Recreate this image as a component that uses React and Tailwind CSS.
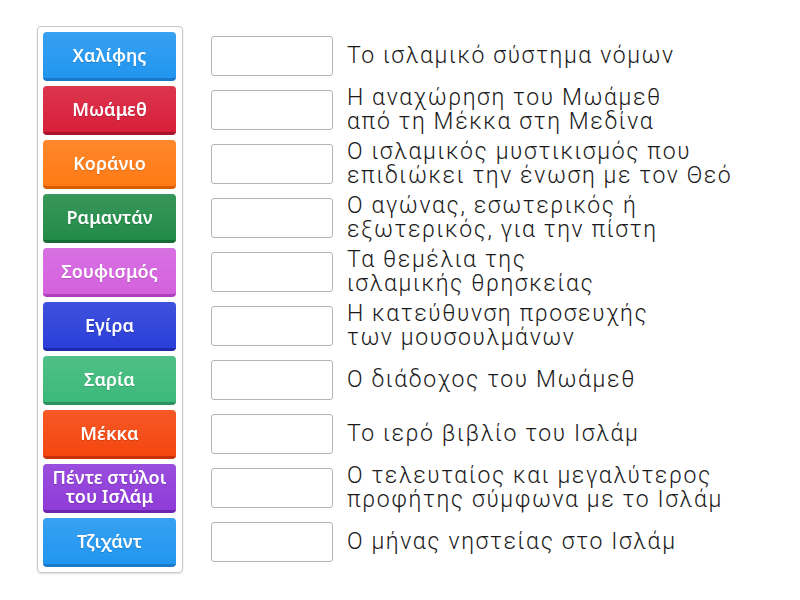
const tiles = [
  { label: 'Χαλίφης', cls: 'bg-[#2196f0] border-[#1a78c8]' },
  { label: 'Μωάμεθ', cls: 'bg-[#d81f3a] border-[#a8142a]' },
  { label: 'Κοράνιο', cls: 'bg-[#ff7a14] border-[#d95e00]' },
  { label: 'Ραμαντάν', cls: 'bg-[#228b48] border-[#176a34]' },
  { label: 'Σουφισμός', cls: 'bg-[#d461de] border-[#b03fbb]' },
  { label: 'Εγίρα', cls: 'bg-[#2a3ed9] border-[#1c2aa8]' },
  { label: 'Σαρία', cls: 'bg-[#3cb97a] border-[#2a935d]' },
  { label: 'Μέκκα', cls: 'bg-[#f5460f] border-[#c83305]' },
  { label: 'Πέντε στύλοι του Ισλάμ', cls: 'bg-[#8f3bd9] border-[#6d25b0]' },
  { label: 'Τζιχάντ', cls: 'bg-[#2196f0] border-[#1a78c8]' },
];

const prompts = [
  'Το ισλαμικό σύστημα νόμων',
  'Η αναχώρηση του Μωάμεθ\nαπό τη Μέκκα στη Μεδίνα',
  'Ο ισλαμικός μυστικισμός που\nεπιδιώκει την ένωση με τον Θεό',
  'Ο αγώνας, εσωτερικός ή\nεξωτερικός, για την πίστη',
  'Τα θεμέλια της\nισλαμικής θρησκείας',
  'Η κατεύθυνση προσευχής\nτων μουσουλμάνων',
  'Ο διάδοχος του Μωάμεθ',
  'Το ιερό βιβλίο του Ισλάμ',
  'Ο τελευταίος και μεγαλύτερος\nπροφήτης σύμφωνα με το Ισλάμ',
  'Ο μήνας νηστείας στο Ισλάμ',
];

export default function App() {
  return (
    <div className="w-[800px] h-[600px] bg-white flex items-start pt-[26px] pl-[37px]" style={{ fontFamily: 'Roboto, "Liberation Sans", sans-serif' }}>
      <div className="w-[146px] border border-[#c8c8c8] rounded-[4px] pt-[5px] pb-[5px] pl-[5px] pr-[6px] flex flex-col gap-[5px] shadow-[0_1px_2px_rgba(0,0,0,0.12)]">
        {tiles.map((t) => (
          <div
            key={t.label}
            className={`h-[49px] rounded-[4px] border-b-[3px] ${t.cls} flex items-center justify-center text-center text-white text-[18px] leading-[19px] font-semibold px-[2px] bg-gradient-to-b from-white/10 to-transparent`}
            style={{ fontFamily: '"Noto Sans", "Open Sans", sans-serif' }}
          >
            <span className="drop-shadow-[0_1px_0_rgba(0,0,0,0.15)]">{t.label}</span>
          </div>
        ))}
      </div>
      <div className="ml-[28px] pt-[3px] flex flex-col">
        {prompts.map((p) => (
          <div key={p} className="h-[54px] flex items-center">
            <div className="w-[122px] h-[40px] border border-[#b5b5b5] rounded-[3px] bg-white shrink-0" />
            <div className="ml-[14px] text-[23px] leading-[24px] tracking-[0.07em] font-light text-[#1a1a1a] whitespace-pre">{p}</div>
          </div>
        ))}
      </div>
    </div>
  );
}
